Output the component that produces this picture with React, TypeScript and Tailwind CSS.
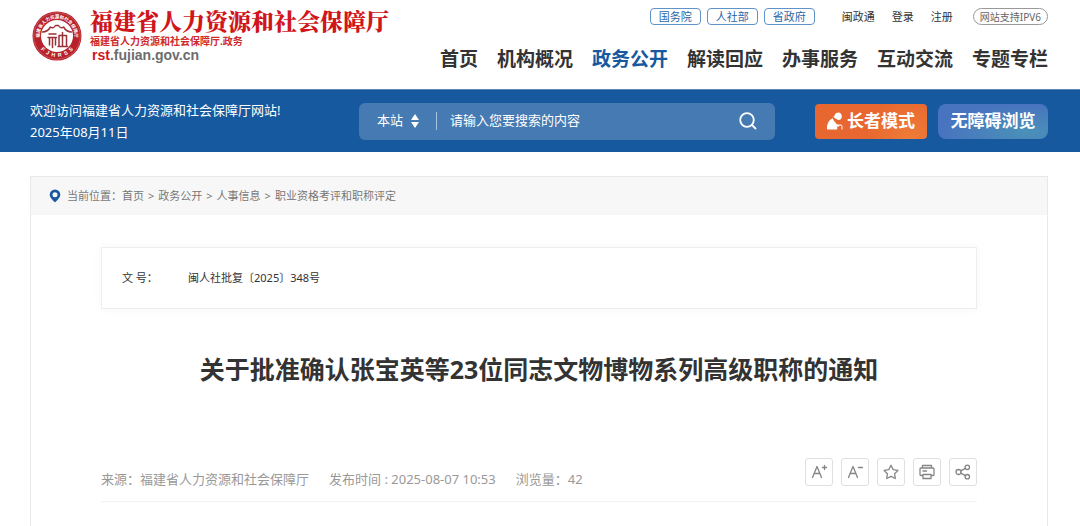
import type { ReactNode } from "react";

const navItems = ["首页", "机构概况", "政务公开", "解读回应", "办事服务", "互动交流", "专题专栏"];
const portals = ["国务院", "人社部", "省政府"];
const accountLinks = ["闽政通", "登录", "注册"];
const crumbs = ["首页", "政务公开", "人事信息", "职业资格考评和职称评定"];

function Seal() {
  return (
    <svg viewBox="0 0 100 100" className="size-[50px] shrink-0" role="img" aria-label="福建省人力资源和社会保障厅徽标">
      <defs>
        <path id="seal-top" d="M16.5 60 A35 35 0 1 1 83.5 60" />
        <path id="seal-bottom" d="M8 58 A43 43 0 0 0 92 58" />
      </defs>
      <circle cx="50" cy="50" r="49" fill="#b8202a" />
      <circle cx="50" cy="50" r="46.5" fill="none" stroke="#d98388" strokeWidth="1" />
      <circle cx="50" cy="50" r="32" fill="#fff" />
      <text fill="#fff" fontSize="9" fontWeight="700" fontFamily="'Noto Sans CJK SC', sans-serif">
        <textPath href="#seal-top" startOffset="50%" textAnchor="middle">福建省人力资源和社会保障厅</textPath>
      </text>
      <text fill="#fff" fontSize="11" fontWeight="700" fontFamily="'Liberation Sans', sans-serif" xmlSpace="preserve">
        <textPath href="#seal-bottom" startOffset="50%" textAnchor="middle">F  J  H  R  S  S</textPath>
      </text>
      <g fill="none" stroke="#9c3038" strokeWidth="3" strokeLinecap="round" strokeLinejoin="round">
        <path d="M21 42 Q31 42 37 32 Q43 36 47 29 H53 Q57 36 63 32 Q69 42 79 42" />
        <path d="M34 46 H48 M32 53 H49 M35 53 V68 M41 53 V73 M47 53 V68" />
        <path d="M54 49 V71 M54 49 H69 V71 M61 43 V71 M52 71 H71" />
      </g>
    </svg>
  );
}

function ToolButton({ label, children }: { label: string; children: ReactNode }) {
  return (
    <button
      type="button"
      aria-label={label}
      className="flex size-7 items-center justify-center rounded-[3px] border border-[#e0e0e0] bg-white text-[#858585]"
    >
      <svg
        viewBox="0 0 18 18"
        className="size-[18px]"
        fill="none"
        stroke="currentColor"
        strokeWidth="1.3"
        strokeLinecap="round"
        strokeLinejoin="round"
        aria-hidden="true"
      >
        {children}
      </svg>
    </button>
  );
}

export default function App() {
  return (
    <div className="flex min-h-screen flex-col bg-white font-['Noto_Sans','Noto_Sans_CJK_SC',sans-serif] text-[#333]">
      <header className="flex h-[89px] justify-between px-8">
        <a href="#" className="flex items-start gap-2 pt-[11px]">
          <Seal />
          <span className="-mt-1 flex flex-col whitespace-nowrap">
            <span className="font-['Noto_Serif_CJK_SC','Noto_Sans_CJK_SC',serif] text-[23px] leading-7 font-black text-[#d0161b]">
              福建省人力资源和社会保障厅
            </span>
            <span className="text-[10px] leading-3 font-bold text-[#cf2a2c]">福建省人力资源和社会保障厅.政务</span>
            <span className="pl-0.5 font-['Liberation_Sans',sans-serif] text-sm leading-4 font-bold text-[#6d6d6d]">
              <span className="text-[#d0161b]">rst</span>.fujian.gov.cn
            </span>
          </span>
        </a>
        <div className="flex flex-col items-end whitespace-nowrap">
          <div className="flex items-center pt-2 text-[11px] leading-4">
            <div className="flex gap-1.5">
              {portals.map((name) => (
                <a key={name} href="#" className="flex h-[17px] items-center rounded border border-[#5f93c9] px-2 text-[#2a67a9]">
                  {name}
                </a>
              ))}
            </div>
            <div className="mr-5 ml-[27px] flex gap-[17px]">
              {accountLinks.map((name) => (
                <a key={name} href="#">
                  {name}
                </a>
              ))}
            </div>
            <a href="#" className="flex h-[17px] items-center rounded-full border border-[#999] px-1.5 text-[10px] text-[#666]">
              网站支持IPV6
            </a>
          </div>
          <nav aria-label="主导航" className="mt-5 flex gap-[19px] text-[19px] leading-7 font-bold">
            {navItems.map((name) => (
              <a key={name} href="#" className={name === "政务公开" ? "text-[#17589f]" : "text-[#333]"}>
                {name}
              </a>
            ))}
          </nav>
        </div>
      </header>

      <div className="flex h-[63px] items-center border-t border-[#5c87b8] bg-[#16599f] pr-8 pl-[30px] text-white">
        <div className="w-[329px] shrink-0 text-[13px] leading-[22px] whitespace-nowrap">
          <p>欢迎访问福建省人力资源和社会保障厅网站!</p>
          <p>2025年08月11日</p>
        </div>
        <form role="search" className="flex h-[37px] flex-1 items-center rounded-md bg-[#457ab2] px-[18px] text-[13px]">
          <div className="flex items-center">
            <select aria-label="搜索范围" className="h-6 w-[50px] appearance-none bg-transparent text-[13px] outline-none">
              <option>本站</option>
            </select>
            <svg viewBox="0 0 8 14" className="pointer-events-none -ml-4 h-3.5 w-2" fill="white" aria-hidden="true">
              <path d="M4 0 L8 6 H0Z M4 14 L0 8 H8Z" />
            </svg>
          </div>
          <div className="ml-[17px] h-[18px] w-px bg-[#a8c3de]" />
          <input
            type="text"
            aria-label="搜索关键词"
            placeholder="请输入您要搜索的内容"
            className="min-w-0 flex-1 bg-transparent pl-[13px] outline-none placeholder:text-white"
          />
          <button type="submit" aria-label="搜索">
            <svg viewBox="0 0 18 18" className="size-[18px]" fill="none" stroke="white" strokeWidth="1.8" strokeLinecap="round" aria-hidden="true">
              <circle cx="8" cy="8" r="6.8" />
              <path d="M13 13 L16.5 16.5" />
            </svg>
          </button>
        </form>
        <button
          type="button"
          className="ml-10 flex h-[35px] w-28 items-center justify-center gap-1 rounded bg-[radial-gradient(circle_at_85%_100%,#ee7c38,#e8662f_45%)] text-[17px] font-bold whitespace-nowrap"
        >
          <svg viewBox="0 0 16 18" className="h-[18px] w-4" fill="white" aria-hidden="true">
            <path d="M8 2.2 Q9 0.4 11.4 0.4 A3.9 3.9 0 0 1 12.6 7.8 Q10.6 8.6 8.6 6.6 Q7.6 5.6 6.2 5 Q7.6 4.2 8 2.2Z" />
            <path d="M0 17.5 V14 Q1 8.4 5.6 6.2 Q7 9.6 9.6 12 L12.6 13 L12 14.4 H10.2 V17.5Z" />
            <path d="M12 13 Q15 12.2 15 14.4 V17.5" fill="none" stroke="white" strokeWidth="1" />
          </svg>
          长者模式
        </button>
        <button
          type="button"
          className="ml-[11px] flex h-[35px] w-[110px] items-center justify-center rounded-lg bg-[radial-gradient(ellipse_at_80%_80%,#4a91b8,#4873bf_70%)] text-[17px] font-bold whitespace-nowrap"
        >
          无障碍浏览
        </button>
      </div>

      <main className="mt-6 mr-8 ml-[30px] flex-1 border border-b-0 border-[#e8e8e8]">
        <nav aria-label="当前位置" className="flex h-[38px] items-center bg-[#f7f7f7] pl-[18px] text-[11px] whitespace-nowrap text-[#777]">
          <svg viewBox="0 0 12 14" className="mr-1.5 h-3.5 w-3" aria-hidden="true">
            <path fillRule="evenodd" fill="#17589f" d="M6 0.5 A5.3 5.3 0 0 1 11.3 5.8 C11.3 8.8 8.2 11 6 13.6 C3.8 11 0.7 8.8 0.7 5.8 A5.3 5.3 0 0 1 6 0.5Z M6 3.2 A2.5 2.5 0 1 0 6 8.2 A2.5 2.5 0 1 0 6 3.2Z" />
          </svg>
          <span>当前位置：</span>
          <ol className="flex">
            {crumbs.map((name, i) => (
              <li key={name} className="flex">
                {i > 0 && <span className="px-1">&gt;</span>}
                <a href="#">{name}</a>
              </li>
            ))}
          </ol>
        </nav>
        <article className="px-[70px] pt-8">
          <dl className="flex h-[62px] items-center border border-[#eee] pl-5 text-[11px] shadow-[0_0_10px_rgba(0,0,0,0.04)]">
            <dt className="w-[66px]">文 号：</dt>
            <dd>闽人社批复〔2025〕348号</dd>
          </dl>
          <h1 className="mt-[42px] text-center text-[25px] leading-9 font-bold">
            关于批准确认张宝英等23位同志文物博物系列高级职称的通知
          </h1>
          <div className="mt-[71px] flex items-end justify-between border-b border-[#f3f3f3] pb-3">
            <div className="flex gap-5 text-[13px] leading-5 whitespace-nowrap text-[#999]">
              <span>来源：福建省人力资源和社会保障厅</span>
              <span>发布时间 : 2025-08-07 10:53</span>
              <span>浏览量：42</span>
            </div>
            <div className="flex gap-2 pb-[3px]">
              <ToolButton label="放大字体">
                <path d="M2.5 14.5 L7 3.5 L11.5 14.5 M4.2 10.5 H9.8 M12.5 4.5 H16.5 M14.5 2.5 V6.5" />
              </ToolButton>
              <ToolButton label="缩小字体">
                <path d="M2.5 14.5 L7 3.5 L11.5 14.5 M4.2 10.5 H9.8 M12.5 4.5 H16.5" />
              </ToolButton>
              <ToolButton label="收藏">
                <path d="M9 2.3 L11.2 6.6 L16 7.4 L12.6 10.8 L13.3 15.5 L9 13.4 L4.7 15.5 L5.4 10.8 L2 7.4 L6.8 6.6Z" />
              </ToolButton>
              <ToolButton label="打印">
                <path d="M4.5 5 V2.5 H13.5 V5 M4.5 12.5 H3 Q2 12.5 2 11.5 V6 Q2 5 3 5 H15 Q16 5 16 6 V11.5 Q16 12.5 15 12.5 H13.5 M5 11.5 H13 V15.5 H5Z M5 8 H8.5" />
              </ToolButton>
              <ToolButton label="分享">
                <circle cx="4.5" cy="9" r="2.5" />
                <circle cx="13.3" cy="4.3" r="2.2" />
                <circle cx="13.3" cy="13.7" r="2.2" />
                <path d="M6.8 7.9 L11.3 5.4 M6.8 10.1 L11.3 12.6" />
              </ToolButton>
            </div>
          </div>
        </article>
      </main>
    </div>
  );
}
